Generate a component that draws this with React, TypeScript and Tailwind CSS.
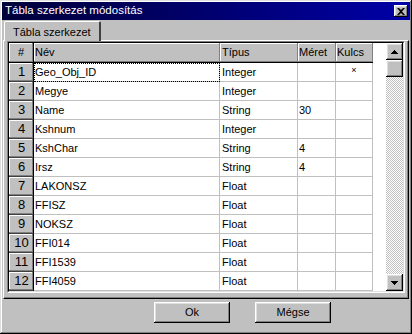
import React from 'react'

const rows = [
  { n: 1, name: 'Geo_Obj_ID', type: 'Integer', size: '', key: '×' },
  { n: 2, name: 'Megye', type: 'Integer', size: '', key: '' },
  { n: 3, name: 'Name', type: 'String', size: '30', key: '' },
  { n: 4, name: 'Kshnum', type: 'Integer', size: '', key: '' },
  { n: 5, name: 'KshChar', type: 'String', size: '4', key: '' },
  { n: 6, name: 'Irsz', type: 'String', size: '4', key: '' },
  { n: 7, name: 'LAKONSZ', type: 'Float', size: '', key: '' },
  { n: 8, name: 'FFISZ', type: 'Float', size: '', key: '' },
  { n: 9, name: 'NOKSZ', type: 'Float', size: '', key: '' },
  { n: 10, name: 'FFI014', type: 'Float', size: '', key: '' },
  { n: 11, name: 'FFI1539', type: 'Float', size: '', key: '' },
  { n: 12, name: 'FFI4059', type: 'Float', size: '', key: '' },
]

const raised = 'shadow-[inset_-1px_-1px_#000,inset_1px_1px_#fff,inset_-2px_-2px_#808080,inset_2px_2px_#dfdfdf]'
const headCell = 'shadow-[inset_-1px_-1px_#808080,inset_1px_1px_#fff]'

function Arrow({ up }: { up?: boolean }) {
  return (
    <svg width="7" height="4" viewBox="0 0 7 4">
      <path d={up ? 'M3 0h1v1h1v1h1v1h1v1H0V3h1V2h1V1h1z' : 'M0 0h7v1H6v1H5v1H4v1H3V3H2V2H1V1H0z'} fill="#000" />
    </svg>
  )
}

function Btn({ label }: { label: string }) {
  return (
    <button className={`w-[76px] h-[21px] bg-[#c0c0c0] ${raised} text-[11px] text-black`}>{label}</button>
  )
}

export default function App() {
  return (
    <div className={`w-[412px] h-[334px] bg-[#c0c0c0] p-[2px] flex flex-col font-['Liberation_Sans',Arial,sans-serif] text-[11px] text-black shadow-[inset_-1px_-1px_#000,inset_1px_1px_#dfdfdf,inset_-2px_-2px_#808080,inset_2px_2px_#fff]`}>
      {/* title */}
      <div className="h-[18px] flex items-center justify-between pl-[3px] pr-[2px] bg-gradient-to-r from-[#00003a] to-[#0000a8]">
        <span className="text-white text-[11.5px] leading-none">Tábla szerkezet módosítás</span>
        <div className={`w-[14px] h-[12px] bg-[#c0c0c0] ${raised} flex items-center justify-center`}>
          <svg width="8" height="7" viewBox="0 0 8 7">
            <path d="M0 0h2l2 2 2-2h2L5 3.5 8 7H6L4 5 2 7H0l3-3.5z" fill="#000" />
          </svg>
        </div>
      </div>

      {/* tabs */}
      <div className="h-[20px] flex items-end pl-[2px] relative z-10">
        <div className="h-[20px] px-[8px] pt-[3px] bg-[#c0c0c0] border-t border-l border-white border-r-2 border-r-[#404040] rounded-tl-[2px] rounded-tr-[2px] -mb-[1px] leading-[14px]">
          Tábla szerkezet
        </div>
      </div>

      {/* page */}
      <div className="h-[259px] mx-[1px] border-t border-l border-white border-r border-b border-r-black border-b-black">
        <div className="h-full pl-[3px] pr-[2px] pb-[3px] border-r border-b border-r-[#808080] border-b-[#808080]">
          <div className="w-[398px] h-[252px] border border-t-[#808080] border-l-[#808080] border-r-white border-b-white">
            <div className="w-full h-full border border-t-black border-l-black border-r-[#dfdfdf] border-b-[#dfdfdf] bg-white flex">
              <div className="w-[364px] flex flex-col">
                <div className="h-[20px] flex border-b border-black">
                  <div className={`w-[25px] h-full border-r border-black bg-[#c0c0c0] ${headCell} flex items-center justify-center`}>#</div>
                  <div className={`w-[186px] h-full bg-[#c0c0c0] ${headCell} flex items-center pl-[1px]`}>Név</div>
                  <div className={`w-[78px] h-full bg-[#c0c0c0] ${headCell} flex items-center pl-[2px]`}>Típus</div>
                  <div className={`w-[38px] h-full bg-[#c0c0c0] ${headCell} flex items-center pl-[1px]`}>Méret</div>
                  <div className={`w-[37px] h-full bg-[#c0c0c0] ${headCell} flex items-center pl-[1px]`}>Kulcs</div>
                </div>
                {rows.map((r) => (
                  <div key={r.n} className="h-[19px] flex">
                    <div className="w-[25px] h-full border-r border-black bg-[#c0c0c0] shadow-[inset_-1px_-1px_#808080,inset_1px_1px_#fff] border-b border-b-[#404040] flex items-center justify-center pl-[1px] text-[13px]">{r.n}</div>
                    <div className={`w-[186px] h-full border-r border-b border-[#c0c0c0] flex items-center pl-[1px] ${r.n === 1 ? 'outline outline-1 outline-dotted outline-black -outline-offset-1' : ''}`}>{r.name}</div>
                    <div className="w-[78px] h-full border-r border-b border-[#c0c0c0] flex items-center pl-[2px]">{r.type}</div>
                    <div className="w-[38px] h-full border-r border-b border-[#c0c0c0] flex items-center pl-[1px]">{r.size}</div>
                    <div className="w-[37px] h-full border-r border-b border-[#c0c0c0] flex items-start justify-center pt-[1px] text-[9px]">{r.key}</div>
                  </div>
                ))}
              </div>
              <div className="w-[13px]" />
              {/* scrollbar */}
              <div className="w-[17px] h-full flex flex-col bg-[image:repeating-conic-gradient(#c0c0c0_0%_25%,#ffffff_0%_50%)] bg-[length:2px_2px]">
                <div className={`h-[17px] bg-[#c0c0c0] ${raised} flex items-center justify-center`}><Arrow up /></div>
                <div className={`h-[17px] bg-[#c0c0c0] ${raised}`} />
                <div className="flex-1" />
                <div className={`h-[17px] bg-[#c0c0c0] ${raised} flex items-center justify-center`}><Arrow /></div>
              </div>
            </div>
          </div>
        </div>
      </div>

      {/* buttons */}
      <div className="flex-1 flex items-start pt-[3px] pl-[152px] gap-[25px]">
        <Btn label="Ok" />
        <Btn label="Mégse" />
      </div>
    </div>
  )
}
